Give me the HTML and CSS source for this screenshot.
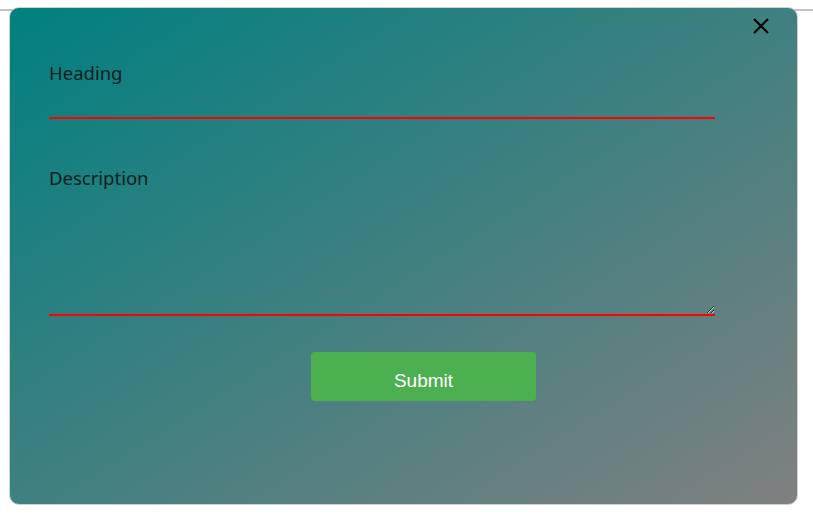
FILE: index.html
```html
<!DOCTYPE html>
<html>
<head>
<meta charset="utf-8">
<link rel="stylesheet" href="styles.css">
</head>
<body>
<div class="topline"></div>
<div class="modal">
  <button class="close" aria-label="Close">
    <svg width="18" height="18" viewBox="0 0 18 18"><path d="M2 2 L16 16 M16 2 L2 16" stroke="#000" stroke-width="2.2" fill="none"/></svg>
  </button>
  <form class="form">
    <label class="label label-heading">Heading</label>
    <input class="field" type="text">
    <label class="label label-desc">Description</label>
    <textarea class="area"></textarea>
    <button class="submit" type="button">Submit</button>
  </form>
</div>
</body>
</html>
```
FILE: styles.css
```css
html, body {
  margin: 0;
  padding: 0;
  background: #fff;
}
.topline {
  margin-top: 9px;
  height: 0;
  border-top: 2px solid #c4c4c4;
}
.modal {
  position: absolute;
  left: 9px;
  top: 7px;
  width: 787px;
  height: 496px;
  border: 1px solid #cfcfcf;
  border-radius: 10px;
  background: linear-gradient(to bottom right, #008080, #808080);
}
.close {
  position: absolute;
  right: 27px;
  top: 9px;
  width: 18px;
  height: 18px;
  padding: 0;
  border: none;
  background: transparent;
  cursor: pointer;
}
.close svg { display: block; }
.form {
  display: flex;
  flex-direction: column;
  align-items: flex-start;
  padding-left: 39px;
  width: 666px;
}
.label {
  display: block;
  font-family: "Noto Sans", sans-serif;
  font-size: 18.5px;
  line-height: 24px;
  color: #0c1c1c;
}
.label-heading { margin-top: 53px; }
.label-desc { margin-top: 47px; }
.field, .area {
  width: 666px;
  box-sizing: border-box;
  background: transparent;
  border: none;
  border-bottom: 2px solid #ff0000;
  outline: none;
  margin: 0;
  padding: 4px 0;
  font-family: "Noto Sans", sans-serif;
  font-size: 16px;
}
.field {
  margin-top: 2px;
  height: 32px;
}
.area {
  margin-top: 4px;
  height: 122px;
  resize: vertical;
}
.submit {
  margin-top: 36px;
  margin-left: 262px;
  width: 225px;
  height: 49px;
  border: none;
  border-radius: 4px;
  background: #4caf50;
  color: #fff;
  font-family: "Liberation Sans", Arial, sans-serif;
  font-size: 19px;
  padding: 9px 0 0;
}
```
